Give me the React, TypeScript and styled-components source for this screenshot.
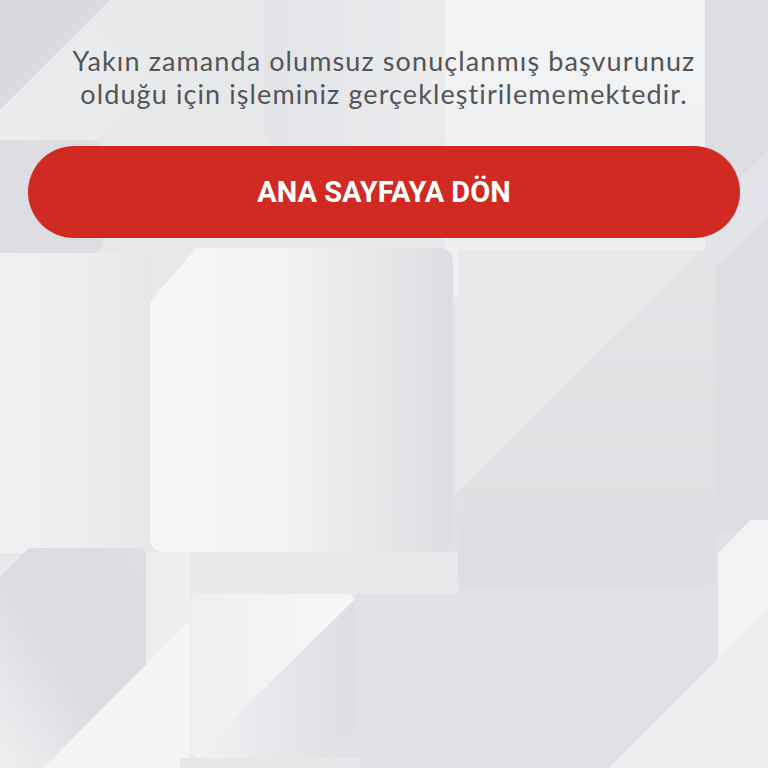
import styled, { createGlobalStyle } from 'styled-components';

const GlobalStyle = createGlobalStyle`
  html, body {
    margin: 0;
    padding: 0;
    background: #e3e4e6;
  }
  * { box-sizing: border-box; }
`;

const Page = styled.div`
  position: relative;
  width: 768px;
  height: 768px;
  overflow: hidden;
  background: #e3e4e6;
  font-family: Lato, "Open Sans", sans-serif;
`;

// decorative backdrop, sits under the content
const Backdrop = styled.svg`
  position: absolute;
  inset: 0;
  width: 100%;
  height: 100%;
`;

const Content = styled.main`
  position: relative;
  display: flex;
  flex-direction: column;
  align-items: center;
  padding: 44px 28px 0;
  gap: 36px;
`;

const Message = styled.div`
  display: flex;
  flex-direction: column;
  align-items: center;
  font-size: 27px;
  font-weight: 400;
  letter-spacing: 1.1px;
  color: #545557;
`;

const Line = styled.span`
  display: block;
  height: 33px;
  line-height: 33px;
  white-space: nowrap;
`;

const HomeButton = styled.button`
  width: 100%;
  height: 92px;
  border: none;
  border-radius: 46px;
  background: #d02a22;
  color: #fff;
  font-family: Roboto, "Liberation Sans", sans-serif;
  font-weight: 700;
  font-size: 29px;
  cursor: pointer;
`;

function Pattern() {
  return (
    <Backdrop viewBox="0 0 768 768">
      <defs>
        <linearGradient id="centerBox" x1="0" y1="0" x2="1" y2="0">
          <stop offset="0" stopColor="#f5f6f7" />
          <stop offset="0.45" stopColor="#f1f2f3" />
          <stop offset="1" stopColor="#dcdee1" />
        </linearGradient>
        <linearGradient id="band" x1="0" y1="1" x2="1" y2="0">
          <stop offset="0" stopColor="#eceef0" />
          <stop offset="1" stopColor="#e7e8ea" />
        </linearGradient>
        <linearGradient id="topBox" x1="0" y1="0" x2="1" y2="0">
          <stop offset="0" stopColor="#e3e4e7" />
          <stop offset="1" stopColor="#ebecee" />
        </linearGradient>
        <linearGradient id="whiteBox" x1="0" y1="0" x2="0" y2="1">
          <stop offset="0" stopColor="#f3f4f6" />
          <stop offset="1" stopColor="#eceef0" />
        </linearGradient>
        <linearGradient id="rightBox" x1="0" y1="0" x2="0" y2="1">
          <stop offset="0" stopColor="#e4e5e7" />
          <stop offset="1" stopColor="#dcdee1" />
        </linearGradient>
        <linearGradient id="leftArea" x1="0" y1="0" x2="1" y2="0">
          <stop offset="0" stopColor="#f0f1f3" />
          <stop offset="0.7" stopColor="#ebecee" />
          <stop offset="1" stopColor="#e6e7e9" />
        </linearGradient>
        <linearGradient id="cornerBox" x1="0" y1="1" x2="1" y2="0">
          <stop offset="0" stopColor="#eff0f2" />
          <stop offset="0.45" stopColor="#dadcdf" />
          <stop offset="1" stopColor="#dcdee1" />
        </linearGradient>
        <linearGradient id="smallBox" x1="0" y1="0" x2="1" y2="0">
          <stop offset="0" stopColor="#eeeff1" />
          <stop offset="1" stopColor="#f6f7f8" />
        </linearGradient>
        <linearGradient id="smallShade" x1="0" y1="0" x2="1" y2="0">
          <stop offset="0" stopColor="#f1f2f4" />
          <stop offset="1" stopColor="#dcdee1" />
        </linearGradient>
      </defs>

      <rect x="0" y="0" width="768" height="768" fill="#e1e2e5" />
      {/* lighter half above the long diagonal */}
      <polygon points="0,0 768,0 768,182 0,950" fill="#e7e8ea" />

      {/* top left stripes */}
      <polygon points="0,0 110,0 0,110" fill="#d9dbde" />
      <polygon points="0,110 110,0 235,0 0,235" fill="url(#band)" />

      {/* top boxes */}
      <rect x="265" y="-20" width="180" height="165" rx="16" fill="url(#topBox)" />
      <rect x="445" y="-20" width="260" height="320" rx="20" fill="url(#whiteBox)" />
      <rect x="705" y="0" width="63" height="530" fill="#dcdee1" />
      <polygon points="768,150 768,215 705,278 705,213" fill="#e3e4e7" />

      {/* box under the button on the left */}
      <rect x="-20" y="140" width="123" height="113" rx="12" fill="#dcdee1" />
      <rect x="0" y="253" width="150" height="300" fill="url(#leftArea)" />

      {/* right box */}
      <path d="M458,250 H716 V574 Q716,586 704,586 H470 Q458,586 458,574 Z" fill="url(#rightBox)" />
      <polygon points="458,250 700,250 458,492" fill="#e8e9eb" />

      {/* center box */}
      <path d="M196,248 H438 Q453,248 453,263 V537 Q453,552 438,552 H165 Q150,552 150,537 V302 Z" fill="url(#centerBox)" />

      {/* light space under center box */}
      <rect x="146" y="552" width="312" height="42" fill="#e9eaec" />

      {/* bottom left box */}
      <path d="M0,577 L29,548 H138 Q146,548 146,556 V665 L43,768 H0 Z" fill="url(#cornerBox)" />
      <rect x="146" y="552" width="44" height="216" fill="#eceef0" />
      <polygon points="146,665 190,621 190,768 43,768" fill="#f3f4f5" />

      {/* bottom small box */}
      <path d="M200,594 H350 L355,599 V730 L328,758 H200 Q190,758 190,748 V604 Q190,594 200,594 Z" fill="url(#smallBox)" />
      <polygon points="355,599 355,730 328,758 194,758" fill="url(#smallShade)" />
      <rect x="180" y="758" width="180" height="10" fill="#e6e7e9" />

      {/* right edge */}
      <polygon points="768,609 768,768 609,768" fill="#eceef0" />
      <path d="M750,520 H768 V670 H728 Q718,670 718,660 V553 Z" fill="#f1f2f4" />
      <polygon points="768,610 768,670 718,670 718,660" fill="#eceef0" />
    </Backdrop>
  );
}

export default function App() {
  return (
    <>
      <GlobalStyle />
      <Page>
        <Pattern />
        <Content>
          <Message>
            <Line>Yakın zamanda olumsuz sonuçlanmış başvurunuz</Line>
            <Line>olduğu için işleminiz gerçekleştirilememektedir.</Line>
          </Message>
          <HomeButton type="button">ANA SAYFAYA DÖN</HomeButton>
        </Content>
      </Page>
    </>
  );
}
